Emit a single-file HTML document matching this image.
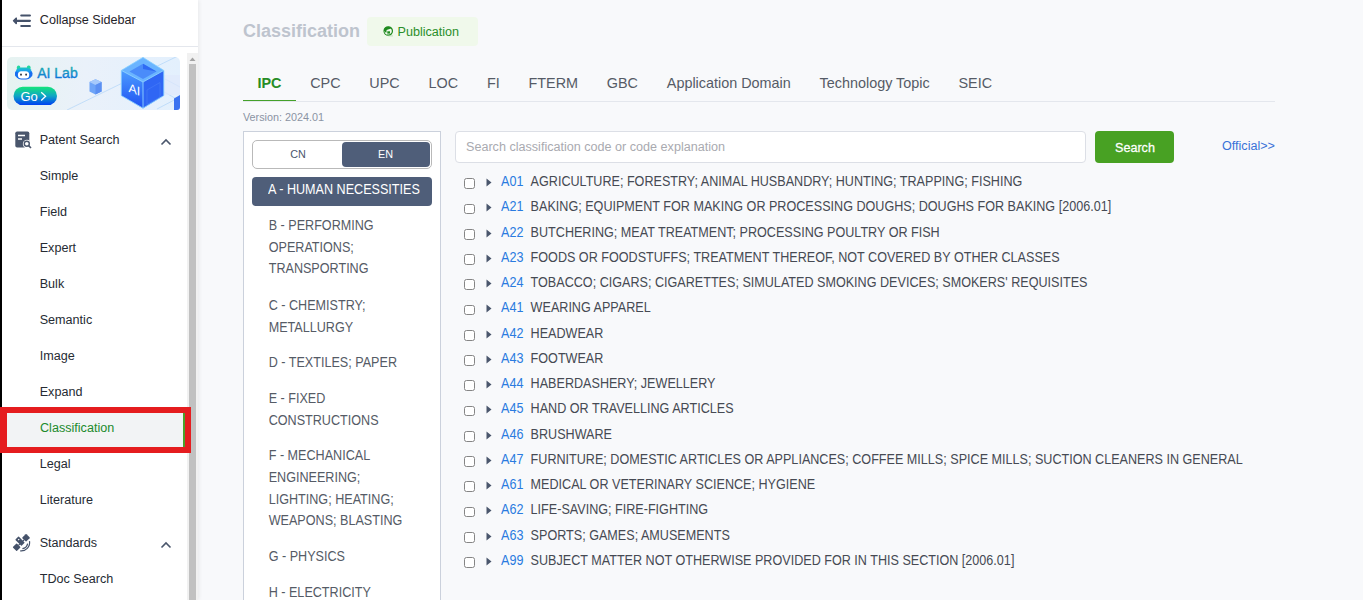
<!DOCTYPE html>
<html><head><meta charset="utf-8">
<style>
*{margin:0;padding:0;box-sizing:border-box}
html,body{width:1363px;height:600px;overflow:hidden;background:#f8f9fb;font-family:"Liberation Sans",sans-serif;font-size:12.6px;color:#303133}
.a{position:absolute;white-space:nowrap;line-height:1}
#side{position:absolute;left:0;top:0;width:198px;height:600px;background:#fff;box-shadow:1px 0 4px rgba(0,0,0,0.07)}
#blk{position:absolute;left:0;top:0;width:2px;height:600px;background:#000}
#topdiv{position:absolute;left:2px;top:46px;width:196px;height:1px;background:#e4e7ed}
#track{position:absolute;left:187px;top:53px;width:11px;height:547px;background:#f1f1f1}
#thumb{position:absolute;left:189px;top:64px;width:7px;height:536px;background:#c1c1c1}
.sb{color:#1f2329}
.nav{color:#262b33}
#redbox{position:absolute;left:0;top:407px;width:191px;height:46px;border:6px solid #e51c1f;border-left-width:7px;background:#f2f3f5}
#greenbar{position:absolute;left:183px;top:413px;width:2px;height:34px;background:#4aa12a}
#main .t{color:#555b66}
.tab{display:inline-block;padding:0 14.4px}
.tab.act{color:#278d25;font-weight:bold}
.cl{left:268.7px;color:#303640}
.cb{position:absolute;left:464.3px;width:10.8px;height:10.8px;border:1px solid #858585;border-radius:2.5px;background:#fff}
.tri{left:486px}
.code{left:501px;color:#2a7be0}
.desc{left:530.6px;color:#464a53}
.t,.desc,.code,.nav,.sb{transform:scaleY(1.1);transform-origin:0 10.67px}
.nav,.sb,.t.m{transform:scaleY(1.05)}
</style></head><body>
<div id="side">
  <div id="blk"></div>
  <!-- collapse icon -->
  <svg class="a" style="left:12px;top:13px" width="20" height="16" viewBox="0 0 20 16">
    <path d="M9.3 2.5H17.9M9.3 13H17.9M4 7.8H17.9" stroke="#45526a" stroke-width="2.2" stroke-linecap="round"/>
    <path d="M1.6 7.8L4.2 5.2V10.4Z" fill="#45526a" stroke="#45526a" stroke-width="1.6" stroke-linejoin="round"/>
  </svg>
  <div class="a sb" style="left:39.8px;top:13.6px">Collapse Sidebar</div>
  <div id="topdiv"></div>
  <div id="track"></div>
  <svg class="a" style="left:189px;top:56px" width="7" height="6" viewBox="0 0 7 6"><path d="M0.5 5H6.5L3.5 1.5Z" fill="#a3a3a3"/></svg>
  <div id="thumb"></div>

  <!-- banner -->
  <svg class="a" style="left:7px;top:57px" width="173" height="53" viewBox="0 0 173 53">
    <defs>
      <linearGradient id="bg" x1="0" y1="0" x2="1" y2="0">
        <stop offset="0" stop-color="#e6f3f1"/><stop offset="0.45" stop-color="#eaf1fa"/><stop offset="1" stop-color="#e3f0fd"/>
      </linearGradient>
      <linearGradient id="go" x1="0" y1="0" x2="0" y2="1">
        <stop offset="0" stop-color="#14e57a"/><stop offset="0.5" stop-color="#0ea6c4"/><stop offset="1" stop-color="#0040f2"/>
      </linearGradient>
      <linearGradient id="txt" x1="0" y1="0" x2="0" y2="1">
        <stop offset="0" stop-color="#1cb8a4"/><stop offset="1" stop-color="#0a6ae6"/>
      </linearGradient>
      <linearGradient id="rob" x1="0" y1="0" x2="0" y2="1">
        <stop offset="0" stop-color="#1cc8c0"/><stop offset="0.3" stop-color="#1a9cf0"/><stop offset="1" stop-color="#0f5ef2"/>
      </linearGradient>
      <linearGradient id="cube" x1="0" y1="0" x2="0" y2="1">
        <stop offset="0" stop-color="#4f9cff"/><stop offset="1" stop-color="#1c4ef0"/>
      </linearGradient>
      <linearGradient id="cubeL" x1="0" y1="0" x2="0" y2="1">
        <stop offset="0" stop-color="#4c9cff"/><stop offset="1" stop-color="#1f52f2"/>
      </linearGradient>
    </defs>
    <rect x="0" y="0" width="173" height="53" rx="5" fill="url(#bg)"/>
    <path d="M60 53L173 -2M150 52L173 40M158 22L173 30M145 28L173 44" stroke="#a8d0f8" stroke-width="0.6" fill="none"/>
    <rect x="150" y="18" width="23" height="20" fill="#dfe8fb" opacity="0.7"/>
    <!-- robot -->
    <rect x="9.9" y="8.6" width="3.4" height="5" rx="1.6" fill="#22d8a0"/>
    <rect x="19.9" y="8.6" width="3.6" height="5" rx="1.6" fill="#22d8a0"/>
    <rect x="8.2" y="10.6" width="17" height="12" rx="6" fill="url(#rob)"/><rect x="8" y="14.5" width="3" height="5" rx="1.5" fill="#1a6ef0"/><rect x="22.4" y="14.5" width="3" height="5" rx="1.5" fill="#1a6ef0"/>
    <rect x="10.9" y="14.2" width="11.3" height="7.2" rx="3.5" fill="#fff"/>
    <ellipse cx="14" cy="17.6" rx="0.8" ry="1.2" fill="#1a2030"/><ellipse cx="19.1" cy="17.6" rx="0.8" ry="1.2" fill="#1a2030"/>
    <text x="30.2" y="20.7" font-family="Liberation Sans" font-size="14" fill="url(#txt)" stroke="url(#txt)" stroke-width="0.35">AI Lab</text>
    <rect x="6.5" y="29.7" width="43.5" height="18.4" rx="9.2" fill="url(#go)"/>
    <text x="13.4" y="43.9" font-family="Liberation Sans" font-size="13" fill="#fff">Go</text>
    <path d="M34.2 35.2L38.6 39.3L34.2 43.4" stroke="#fff" stroke-width="1.3" fill="none"/>
    <!-- small cube -->
    <path d="M82.5 25L88.5 22.2L94.6 25V34.5L88.5 37.6L82.5 34.5Z" fill="#6ea4f8"/>
    <path d="M82.5 25L88.5 22.2L94.6 25L88.5 28Z" fill="#a6c9fb"/>
    <path d="M88.5 28V37.6L94.6 34.5V25Z" fill="#5b8ff2"/>
    <!-- big cube -->
    <path d="M136 0.4L156.8 13.4V38.6L136 51.2L114.3 38.6V13.4Z" fill="url(#cube)"/>
    <path d="M136 0.4L156.8 13.4L136 25L114.3 13.4Z" fill="#6ab4ff"/>
    <path d="M136 6.7L149.5 14.4L136 22L122.5 14.4Z" fill="#4a8cfa"/>
    <path d="M136 6.7L149.5 14.4L136 12Z" fill="#2f6bf4"/>
    <path d="M114.3 13.4L136 25V51.2L114.3 38.6Z" fill="url(#cubeL)"/>
    <path d="M136 25V51.2L156.8 38.6V13.4Z" fill="#2f66f4"/>
    <path d="M136 0.4L156.8 13.4V38.6L136 51.2L114.3 38.6V13.4Z M136 25V51.2 M114.3 13.4L136 25L156.8 13.4" stroke="#8fd4ff" stroke-width="1" fill="none" opacity="0.9"/>
    <path d="M140 33L153 25.5V40L140 47.5Z" stroke="#6fa0fa" stroke-width="0.4" fill="none" opacity="0.6"/>
    <text x="121.5" y="38" font-family="Liberation Sans" font-size="12.5" fill="#fff" transform="translate(0 -47.5) skewY(20)">AI</text>
    <path d="M167 41.5L173 38V50Q173 53 170 53H167Z" fill="#3a72f0"/>
  </svg>

  <!-- Patent search -->
  <svg class="a" style="left:14.7px;top:131px" width="17" height="18" viewBox="0 0 17 18">
    <rect x="0.3" y="0.5" width="14" height="16" rx="1.8" fill="#4a566c"/>
    <path d="M3 4.5H10M3 8H7" stroke="#fff" stroke-width="1.5"/>
    <circle cx="12" cy="13" r="4.2" fill="#fff"/>
    <circle cx="11.8" cy="12.8" r="2.5" fill="none" stroke="#4a566c" stroke-width="1.4"/>
    <path d="M13.6 14.6L16 17" stroke="#4a566c" stroke-width="1.6"/>
  </svg>
  <div class="a nav" style="left:39.7px;top:133.6px">Patent Search</div>
  <svg class="a" style="left:160px;top:137px" width="12" height="9" viewBox="0 0 12 9"><path d="M1.5 7.5L6 3L10.5 7.5" stroke="#4a566c" stroke-width="1.6" fill="none"/></svg>

  <div class="a nav" style="left:39.7px;top:169.6px">Simple</div>
  <div class="a nav" style="left:39.7px;top:205.6px">Field</div>
  <div class="a nav" style="left:39.7px;top:241.6px">Expert</div>
  <div class="a nav" style="left:39.7px;top:277.6px">Bulk</div>
  <div class="a nav" style="left:39.7px;top:313.6px">Semantic</div>
  <div class="a nav" style="left:39.7px;top:349.6px">Image</div>
  <div class="a nav" style="left:39.7px;top:385.6px">Expand</div>
  <div id="redbox"></div>
  <div id="greenbar"></div>
  <div class="a t m" style="left:40px;top:421.6px;color:#218a2c">Classification</div>
  <div class="a nav" style="left:39.7px;top:457.6px">Legal</div>
  <div class="a nav" style="left:39.7px;top:493.6px">Literature</div>

  <svg class="a" style="left:8px;top:528px" width="28" height="28" viewBox="0 0 28 28">
    <g transform="rotate(-45 13.35 14.5)" fill="#45526a">
      <rect x="3.9" y="11.7" width="5.6" height="5.6" rx="0.6"/>
      <rect x="17.2" y="11.7" width="5.6" height="5.6" rx="0.6"/>
      <rect x="11" y="8.2" width="4.7" height="8.8" rx="0.6"/>
      <rect x="9.3" y="13.9" width="2" height="1.2"/>
      <rect x="15.5" y="13.9" width="2" height="1.2"/>
    </g>
    <rect x="10" y="11" width="1.3" height="1.3" fill="#fff" transform="rotate(-45 10.6 11.6)"/>
    <path d="M19.6 15.6A6.3 6.3 0 0 1 14.4 20.7" stroke="#45526a" stroke-width="1.2" fill="none"/>
    <path d="M21.5 13.2A8.3 8.3 0 0 1 12.2 22.8" stroke="#45526a" stroke-width="1.2" fill="none"/>
  </svg>
  <div class="a nav" style="left:39.7px;top:536.6px">Standards</div>
  <svg class="a" style="left:160px;top:540px" width="12" height="9" viewBox="0 0 12 9"><path d="M1.5 7.5L6 3L10.5 7.5" stroke="#4a566c" stroke-width="1.6" fill="none"/></svg>
  <div class="a nav" style="left:39.7px;top:572.6px">TDoc Search</div>
</div>

<div id="main">
  <div class="a" style="left:243px;top:22px;font-size:18px;font-weight:bold;color:#bec4ce">Classification</div>
  <div class="a" style="left:367px;top:17px;width:111px;height:29px;background:#f0f9eb;border-radius:4px"></div>
  <svg class="a" style="left:382px;top:25px" width="12" height="12" viewBox="0 0 12 12">
    <circle cx="6.25" cy="6" r="4.2" fill="none" stroke="#1f8a1f" stroke-width="1.2"/>
    <path d="M1.9 6.2A4.4 4.4 0 0 1 9.6 3.2L8.3 3.8L4.6 5.1L4.4 7.6L2.5 8.2Z" fill="#1f8a1f"/>
    <rect x="5.3" y="6.3" width="2.7" height="2.3" fill="#1f8a1f"/>
    <path d="M2.6 6.6L4.8 9.6" stroke="#fff" stroke-width="0.8"/>
    <path d="M6.3 10.9H11" stroke="#9ccf9c" stroke-width="0.6"/>
  </svg>
  <div class="a t m" style="left:397.5px;top:26px;color:#2a8f2a">Publication</div>

  <div id="tabs" class="a" style="left:243px;top:75.8px;font-size:14.4px;color:#555b66">
    <span class="tab act">IPC</span><span class="tab">CPC</span><span class="tab">UPC</span><span class="tab">LOC</span><span class="tab">FI</span><span class="tab">FTERM</span><span class="tab">GBC</span><span class="tab">Application Domain</span><span class="tab">Technology Topic</span><span class="tab">SEIC</span>
  </div>
  <div class="a" style="left:243px;top:101px;width:1032px;height:1px;background:#e4e7ed"></div>
  <div class="a" style="left:243px;top:99.6px;width:53px;height:1.6px;background:#45a12a"></div>
  <div class="a" style="left:243px;top:112.3px;font-size:10.8px;color:#8a93a3">Version: 2024.01</div>

  <div class="a" style="left:243px;top:131px;width:198px;height:480px;background:#fff;border:1px solid #cbd1dc"></div>
  <div class="a" style="left:252px;top:140px;width:180px;height:29px;border:1px solid #b9b9b9;border-radius:5px;background:#fff"></div>
  <div class="a" style="left:342px;top:142px;width:88px;height:25px;background:#4f5e79;border-radius:4px"></div>
  <div class="a" style="left:290.3px;top:149px;font-size:10.8px;color:#4a566c">CN</div>
  <div class="a" style="left:378px;top:149px;font-size:10.8px;color:#fff">EN</div>
  <div class="a" style="left:252px;top:177px;width:180px;height:29px;background:#4f5e79;border-radius:4px"></div>
  <div class="a t" style="left:268px;top:184.2px;color:#fff">A - HUMAN NECESSITIES</div>
  <div class="a t cl" style="top:220.10px">B - PERFORMING</div>
  <div class="a t cl" style="top:241.70px">OPERATIONS;</div>
  <div class="a t cl" style="top:263.30px">TRANSPORTING</div>
  <div class="a t cl" style="top:300.10px">C - CHEMISTRY;</div>
  <div class="a t cl" style="top:321.70px">METALLURGY</div>
  <div class="a t cl" style="top:357.30px">D - TEXTILES; PAPER</div>
  <div class="a t cl" style="top:393.30px">E - FIXED</div>
  <div class="a t cl" style="top:414.90px">CONSTRUCTIONS</div>
  <div class="a t cl" style="top:450.40px">F - MECHANICAL</div>
  <div class="a t cl" style="top:472.00px">ENGINEERING;</div>
  <div class="a t cl" style="top:493.60px">LIGHTING; HEATING;</div>
  <div class="a t cl" style="top:515.20px">WEAPONS; BLASTING</div>
  <div class="a t cl" style="top:551.20px">G - PHYSICS</div>
  <div class="a t cl" style="top:587.20px">H - ELECTRICITY</div>

  <div class="a" style="left:455px;top:131px;width:631px;height:32px;background:#fff;border:1px solid #dcdfe6;border-radius:4px"></div>
  <div class="a t m" style="left:466px;top:141px;color:#a9aab0">Search classification code or code explanation</div>
  <div class="a" style="left:1095px;top:131px;width:79px;height:32px;background:#48a123;border-radius:4px"></div>
  <div class="a t m" style="left:1115px;top:142.2px;color:#fff;-webkit-text-stroke:0.25px #fff">Search</div>
  <div class="a t m" style="left:1222px;top:140.2px;color:#3a72d8">Official&gt;&gt;</div>
<div class="cb" style="top:178.40px"></div><svg class="a tri" style="top:178.20px" width="6" height="9" viewBox="0 0 6 9"><path d="M0.5 0.5L5.5 4.5L0.5 8.5Z" fill="#4a566c"/></svg><div class="a code" style="top:176.03px">A01</div><div class="a desc" style="top:176.03px">AGRICULTURE; FORESTRY; ANIMAL HUSBANDRY; HUNTING; TRAPPING; FISHING</div>
<div class="cb" style="top:203.65px"></div><svg class="a tri" style="top:203.45px" width="6" height="9" viewBox="0 0 6 9"><path d="M0.5 0.5L5.5 4.5L0.5 8.5Z" fill="#4a566c"/></svg><div class="a code" style="top:201.28px">A21</div><div class="a desc" style="top:201.28px">BAKING; EQUIPMENT FOR MAKING OR PROCESSING DOUGHS; DOUGHS FOR BAKING [2006.01]</div>
<div class="cb" style="top:228.90px"></div><svg class="a tri" style="top:228.70px" width="6" height="9" viewBox="0 0 6 9"><path d="M0.5 0.5L5.5 4.5L0.5 8.5Z" fill="#4a566c"/></svg><div class="a code" style="top:226.53px">A22</div><div class="a desc" style="top:226.53px">BUTCHERING; MEAT TREATMENT; PROCESSING POULTRY OR FISH</div>
<div class="cb" style="top:254.15px"></div><svg class="a tri" style="top:253.95px" width="6" height="9" viewBox="0 0 6 9"><path d="M0.5 0.5L5.5 4.5L0.5 8.5Z" fill="#4a566c"/></svg><div class="a code" style="top:251.78px">A23</div><div class="a desc" style="top:251.78px">FOODS OR FOODSTUFFS; TREATMENT THEREOF, NOT COVERED BY OTHER CLASSES</div>
<div class="cb" style="top:279.40px"></div><svg class="a tri" style="top:279.20px" width="6" height="9" viewBox="0 0 6 9"><path d="M0.5 0.5L5.5 4.5L0.5 8.5Z" fill="#4a566c"/></svg><div class="a code" style="top:277.03px">A24</div><div class="a desc" style="top:277.03px">TOBACCO; CIGARS; CIGARETTES; SIMULATED SMOKING DEVICES; SMOKERS' REQUISITES</div>
<div class="cb" style="top:304.65px"></div><svg class="a tri" style="top:304.45px" width="6" height="9" viewBox="0 0 6 9"><path d="M0.5 0.5L5.5 4.5L0.5 8.5Z" fill="#4a566c"/></svg><div class="a code" style="top:302.28px">A41</div><div class="a desc" style="top:302.28px">WEARING APPAREL</div>
<div class="cb" style="top:329.90px"></div><svg class="a tri" style="top:329.70px" width="6" height="9" viewBox="0 0 6 9"><path d="M0.5 0.5L5.5 4.5L0.5 8.5Z" fill="#4a566c"/></svg><div class="a code" style="top:327.53px">A42</div><div class="a desc" style="top:327.53px">HEADWEAR</div>
<div class="cb" style="top:355.15px"></div><svg class="a tri" style="top:354.95px" width="6" height="9" viewBox="0 0 6 9"><path d="M0.5 0.5L5.5 4.5L0.5 8.5Z" fill="#4a566c"/></svg><div class="a code" style="top:352.78px">A43</div><div class="a desc" style="top:352.78px">FOOTWEAR</div>
<div class="cb" style="top:380.40px"></div><svg class="a tri" style="top:380.20px" width="6" height="9" viewBox="0 0 6 9"><path d="M0.5 0.5L5.5 4.5L0.5 8.5Z" fill="#4a566c"/></svg><div class="a code" style="top:378.03px">A44</div><div class="a desc" style="top:378.03px">HABERDASHERY; JEWELLERY</div>
<div class="cb" style="top:405.65px"></div><svg class="a tri" style="top:405.45px" width="6" height="9" viewBox="0 0 6 9"><path d="M0.5 0.5L5.5 4.5L0.5 8.5Z" fill="#4a566c"/></svg><div class="a code" style="top:403.28px">A45</div><div class="a desc" style="top:403.28px">HAND OR TRAVELLING ARTICLES</div>
<div class="cb" style="top:430.90px"></div><svg class="a tri" style="top:430.70px" width="6" height="9" viewBox="0 0 6 9"><path d="M0.5 0.5L5.5 4.5L0.5 8.5Z" fill="#4a566c"/></svg><div class="a code" style="top:428.53px">A46</div><div class="a desc" style="top:428.53px">BRUSHWARE</div>
<div class="cb" style="top:456.15px"></div><svg class="a tri" style="top:455.95px" width="6" height="9" viewBox="0 0 6 9"><path d="M0.5 0.5L5.5 4.5L0.5 8.5Z" fill="#4a566c"/></svg><div class="a code" style="top:453.78px">A47</div><div class="a desc" style="top:453.78px">FURNITURE; DOMESTIC ARTICLES OR APPLIANCES; COFFEE MILLS; SPICE MILLS; SUCTION CLEANERS IN GENERAL</div>
<div class="cb" style="top:481.40px"></div><svg class="a tri" style="top:481.20px" width="6" height="9" viewBox="0 0 6 9"><path d="M0.5 0.5L5.5 4.5L0.5 8.5Z" fill="#4a566c"/></svg><div class="a code" style="top:479.03px">A61</div><div class="a desc" style="top:479.03px">MEDICAL OR VETERINARY SCIENCE; HYGIENE</div>
<div class="cb" style="top:506.65px"></div><svg class="a tri" style="top:506.45px" width="6" height="9" viewBox="0 0 6 9"><path d="M0.5 0.5L5.5 4.5L0.5 8.5Z" fill="#4a566c"/></svg><div class="a code" style="top:504.28px">A62</div><div class="a desc" style="top:504.28px">LIFE-SAVING; FIRE-FIGHTING</div>
<div class="cb" style="top:531.90px"></div><svg class="a tri" style="top:531.70px" width="6" height="9" viewBox="0 0 6 9"><path d="M0.5 0.5L5.5 4.5L0.5 8.5Z" fill="#4a566c"/></svg><div class="a code" style="top:529.53px">A63</div><div class="a desc" style="top:529.53px">SPORTS; GAMES; AMUSEMENTS</div>
<div class="cb" style="top:557.15px"></div><svg class="a tri" style="top:556.95px" width="6" height="9" viewBox="0 0 6 9"><path d="M0.5 0.5L5.5 4.5L0.5 8.5Z" fill="#4a566c"/></svg><div class="a code" style="top:554.78px">A99</div><div class="a desc" style="top:554.78px">SUBJECT MATTER NOT OTHERWISE PROVIDED FOR IN THIS SECTION [2006.01]</div>
</div>
</body></html>
